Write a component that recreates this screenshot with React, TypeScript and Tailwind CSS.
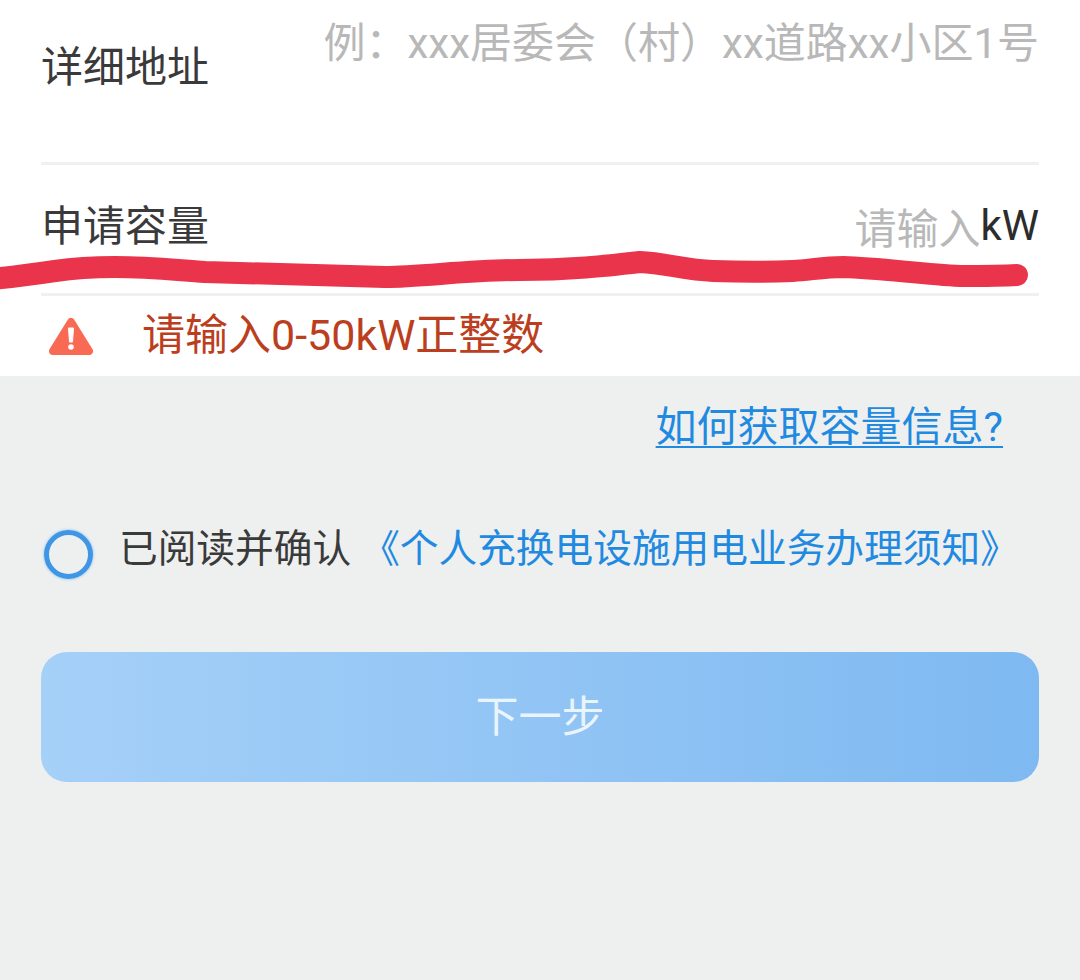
import React from "react";

const cjk = "font-['Roboto','Noto_Sans_CJK_SC',sans-serif]";

function WarnIcon() {
  return (
    <svg width="46" height="40" viewBox="0 0 46 40" className="shrink-0">
      <path
        d="M23 5 L41 34 H5 Z"
        fill="#f96a55"
        stroke="#f96a55"
        strokeWidth="8"
        strokeLinejoin="round"
      />
      <path d="M20.5 11 H25.5 L24.5 25 H21.5 Z" fill="#fff" stroke="#fff" strokeLinejoin="round" />
      <circle cx="23" cy="30" r="2.8" fill="#fff" />
    </svg>
  );
}

export default function App() {
  return (
    <div className={`relative w-[1080px] h-[980px] overflow-hidden bg-[#eef0f0] ${cjk}`}>
      {/* form card */}
      <div className="bg-white h-[376px] px-[41px]">
        <div className="flex justify-between h-[165px] border-b-[3px] border-[#eff0f1]">
          <span className="text-[42px] leading-[56px] mt-[40px] text-[#3a3a3a]">详细地址</span>
          <span className="text-[42px] leading-[56px] mt-[16px] text-[#b8b8b8]">
            例：xxx居委会（村）xx道路xx小区1号
          </span>
        </div>
        <div className="flex justify-between h-[131px] border-b-[3px] border-[#eff0f1]">
          <span className="text-[42px] leading-[56px] mt-[34px] text-[#3a3a3a]">申请容量</span>
          <span className="text-[42px] leading-[56px] mt-[35px]">
            <span className="inline-block translate-y-[2px] text-[#b8b8b8]">请输入</span>
            <span className="inline-block -translate-y-[2px] text-[#2c2c2c]">kW</span>
          </span>
        </div>
        <div className="flex items-center h-[80px] pb-[3px]">
          <div className="ml-[7px] mt-[4px] flex">
            <WarnIcon />
          </div>
          <span className="ml-[48px] text-[43px] leading-[56px] text-[#bb3f1e]">请输入0-50kW正整数</span>
        </div>
      </div>

      <div className="flex justify-end pr-[77px] pt-[26px]">
        <a className="text-[41px] leading-[50px] text-[#1f8ae0] underline decoration-2 underline-offset-[5px]">
          如何获取容量信息?
        </a>
      </div>

      <div className="flex items-center mt-[72px] pl-[44px] h-[50px]">
        <span className="w-[49px] h-[49px] mt-[10px] rounded-full border-[5px] border-[#3f96e4] shadow-[0_0_3px_#7fbcf0] shrink-0" />
        <span className="ml-[26px] text-[38.7px] leading-[50px] text-[#3a3a3a]">已阅读并确认</span>
        <span className="ml-[10px] text-[38.7px] leading-[50px] text-[#1f8ae0]">《个人充换电设施用电业务办理须知》</span>
      </div>

      <div className="mx-[41px] mt-[78px] h-[130px] rounded-[26px] bg-gradient-to-r from-[#a5d0f8] to-[#7eb9f1] flex items-center justify-center">
        <span className="text-[43px] text-[#eaf4fd]">下一步</span>
      </div>

      {/* red pen scribble over the field */}
      <svg className="absolute left-0 top-0 pointer-events-none" width="1080" height="980" viewBox="0 0 1080 980">
        <path
          d="M-10 279 C15 277 35 274 55 271 C75 268 95 267 115 267 C150 267 175 270 205 272 C260 274 320 275 385 277 C420 277 470 270 520 270 C570 270 605 266 640 262 C665 263 685 270 713 271 C740 272 770 272 793 271 C810 270 825 267 843 267 C880 268 920 274 960 276 C980 276 1000 276 1017 275"
          fill="none"
          stroke="#ea344b"
          strokeWidth="22"
          strokeLinecap="round"
          strokeLinejoin="round"
        />
      </svg>
    </div>
  );
}
